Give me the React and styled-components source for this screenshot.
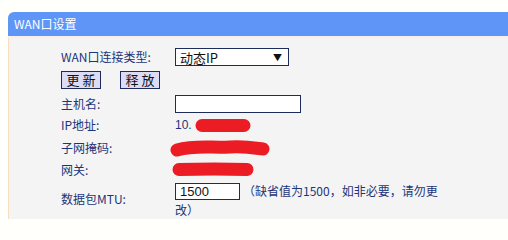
import React from "react";
import styled, { createGlobalStyle } from "styled-components";

const Global = createGlobalStyle`
  html, body { margin: 0; padding: 0; background: #fffffb; overflow: hidden; }
  body { font-family: "Noto Sans CJK SC", "Liberation Sans", sans-serif; font-size: 12px; }
`;

const Panel = styled.div`
  margin: 12px 0 0 8px;
  width: 520px;
`;

const Header = styled.div`
  height: 24px;
  background: #5e95f7;
  border-top-left-radius: 6px;
  color: #fff;
  font-size: 12px;
  line-height: 24px;
  padding-left: 6px;
  border-bottom: 2px solid #fbeee4;
`;

const Body = styled.div`
  background: #f4f4f4;
  border-left: 1px solid #f6dcc0;
  padding: 10px 0 0 52px;
  height: 171px;
  display: flex;
  flex-direction: column;
`;

const Row = styled.div`
  display: flex;
  align-items: ${(p) => p.$align || "center"};
  height: ${(p) => p.$h}px;
  margin-bottom: ${(p) => p.$mb || 0}px;
`;

const Label = styled.div`
  width: 114px;
  color: #1d3478;
  font-size: 12px;
  line-height: 14px;
  flex-shrink: 0;
`;

const Value = styled.div`
  display: flex;
  align-items: center;
  color: #1d3478;
  font-size: 12px;
`;

const FakeSelect = styled.div`
  box-sizing: border-box;
  width: 114px;
  height: 18px;
  border: 1px solid #1e2c5c;
  background: #fff;
  display: flex;
  align-items: center;
  justify-content: space-between;
  padding: 0 6px 0 4px;
  color: #111;
  font-size: 13px;
`;

const Arrow = styled.span`
  font-size: 9px;
  color: #111;
`;

const Button = styled.button`
  box-sizing: border-box;
  height: 18px;
  width: 40px;
  padding: 0;
  margin-right: ${(p) => p.$mr || 0}px;
  border: 1px solid #1e2c5c;
  background: #dcdcf6;
  color: #111;
  font-family: "Noto Sans CJK SC", sans-serif;
  font-size: 13px;
  letter-spacing: 3px;
  text-indent: 3px;
  line-height: 15px;
`;

const Input = styled.input`
  box-sizing: border-box;
  width: ${(p) => p.$w}px;
  height: ${(p) => p.$hgt || 18}px;
  border: 1px solid #1e2c5c;
  background: #fff;
  padding: 0 4px;
  font-family: "Liberation Sans", sans-serif;
  font-size: 13px;
  color: #111;
  outline: none;
`;

const IpText = styled.span`
  font-family: "Liberation Sans", sans-serif;
  font-size: 12px;
  color: #1d3478;
  margin-right: 3px;
`;

const ValueColumn = styled.div`
  display: flex;
  flex-direction: column;
  color: #1d3478;
  font-size: 12px;
  margin-top: 3px;
`;

const Hint = styled.span`
  margin-left: 3px;
  color: #1d3478;
  font-size: 12px;
  line-height: 16px;
`;

const HintTail = styled.span`
  line-height: 18px;
  margin-top: 1px;
`;

const Scribble = ({ w, h, d, ml = 0 }) => (
  <svg width={w} height={h} viewBox={`0 0 ${w} ${h}`} style={{ marginLeft: ml, display: "block" }}>
    <path d={d} stroke="#ec1c24" strokeWidth="13" strokeLinecap="round" strokeLinejoin="round" fill="none" />
  </svg>
);

export default function App() {
  return (
    <>
      <Global />
      <Panel>
        <Header>WAN口设置</Header>
        <Body>
          <Row $h={18} $mb={4}>
            <Label>WAN口连接类型:</Label>
            <FakeSelect>
              <span>动态IP</span>
              <Arrow>▼</Arrow>
            </FakeSelect>
          </Row>
          <Row $h={19} $mb={5}>
            <Button $mr={19}>更新</Button>
            <Button>释放</Button>
          </Row>
          <Row $h={20}>
            <Label>主机名:</Label>
            <Input $w={126} />
          </Row>
          <Row $h={22}>
            <Label>IP地址:</Label>
            <Value>
              <IpText>10.</IpText>
              <Scribble w={56} h={15} d="M7 7.5 L49 7.5" />
            </Value>
          </Row>
          <Row $h={23}>
            <Label>子网掩码:</Label>
            <Value>
              <Scribble w={100} h={18} ml={-5} d="M7 11 C 25 6, 40 9, 60 8 C 75 7, 85 9, 93 10" />
            </Value>
          </Row>
          <Row $h={21}>
            <Label>网关:</Label>
            <Value>
              <Scribble w={82} h={15} ml={-3} d="M7 7.5 C 30 7, 55 7, 75 7.5" />
            </Value>
          </Row>
          <Row $h={38} $align="center">
            <Label>数据包MTU:</Label>
            <ValueColumn>
              <Value>
                <Input $w={65} $hgt={17} defaultValue="1500" />
                <Hint>（缺省值为1500，如非必要，请勿更</Hint>
              </Value>
              <HintTail>改）</HintTail>
            </ValueColumn>
          </Row>
        </Body>
      </Panel>
    </>
  );
}
